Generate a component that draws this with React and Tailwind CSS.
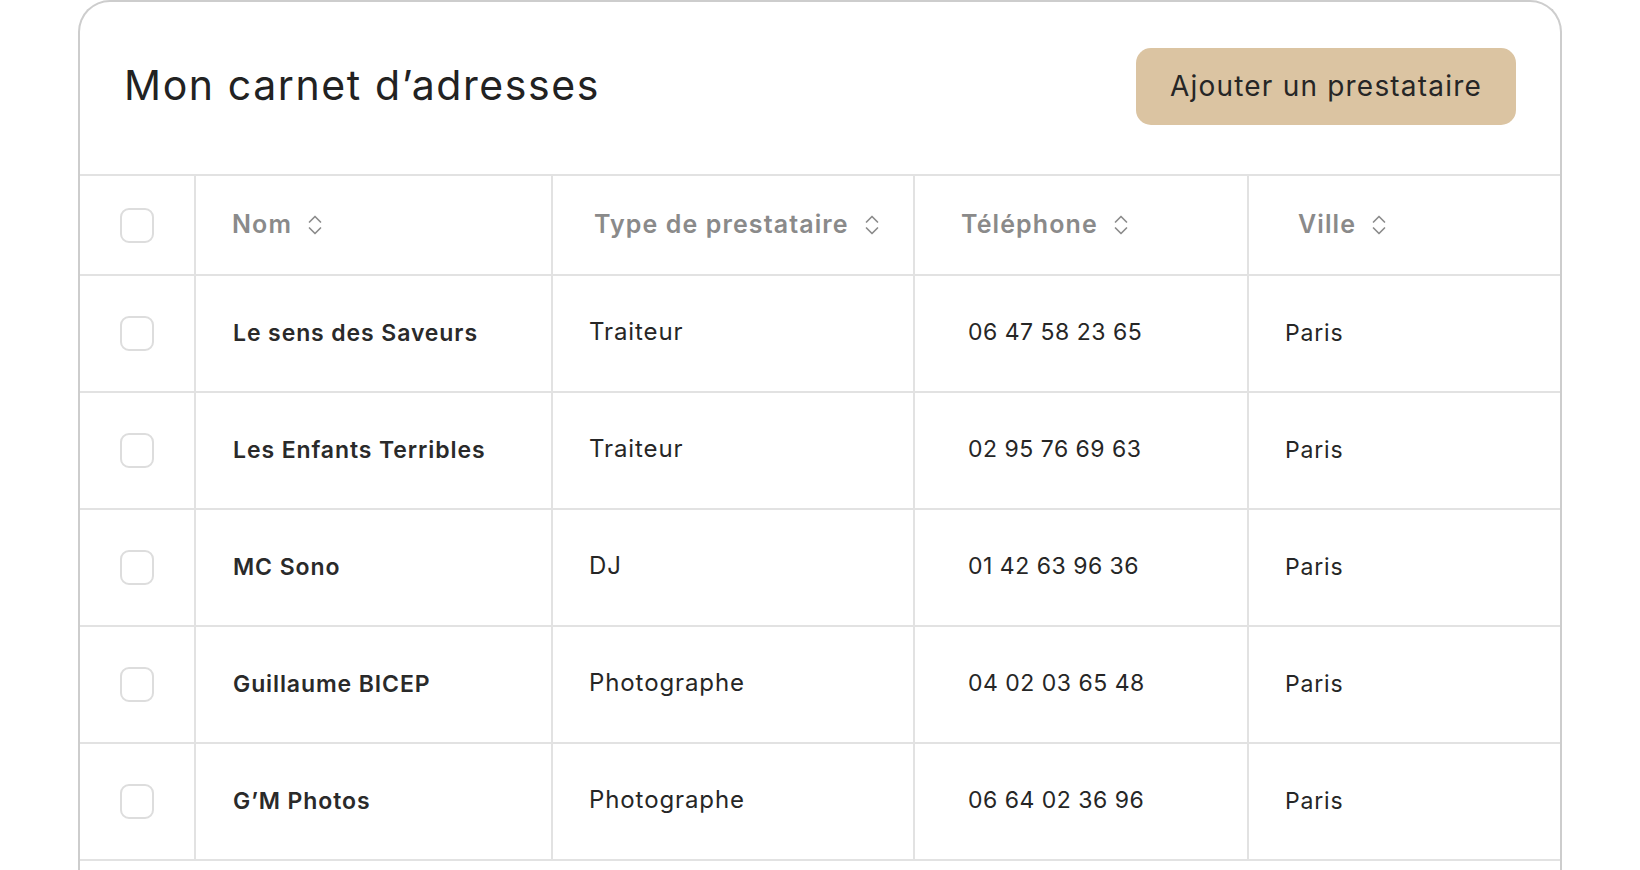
const rows = [
  { name: "Le sens des Saveurs", type: "Traiteur", phone: "06 47 58 23 65", city: "Paris" },
  { name: "Les Enfants Terribles", type: "Traiteur", phone: "02 95 76 69 63", city: "Paris" },
  { name: "MC Sono", type: "DJ", phone: "01 42 63 96 36", city: "Paris" },
  { name: "Guillaume BICEP", type: "Photographe", phone: "04 02 03 65 48", city: "Paris" },
  { name: "G’M Photos", type: "Photographe", phone: "06 64 02 36 96", city: "Paris" },
];

const SortIcon = () => (
  <svg width="14" height="22" viewBox="0 0 14 22" fill="none" stroke="#8c8c8c" strokeWidth="1.7" strokeLinecap="round" strokeLinejoin="round">
    <path d="M1.5 8 L7 2.5 L12.5 8" />
    <path d="M1.5 14 L7 19.5 L12.5 14" />
  </svg>
);

const Checkbox = () => (
  <div className="w-[34px] h-[35px] rounded-[9px] border-2 border-[#dddddd] bg-white" />
);

const HeaderCell = ({ label, className }) => (
  <div className={`flex items-center gap-[16px] border-b-2 border-[#e2e2e2] ${className}`}>
    <span className="text-[25px] font-semibold text-[#8a8a8a] tracking-[1.1px]">{label}</span>
    <SortIcon />
  </div>
);

const App = () => {
  return (
    <div className="min-h-screen bg-white pl-[78px] overflow-hidden" style={{ fontFamily: "Inter, 'Noto Sans', sans-serif" }}>
      <div className="w-[1484px] h-[900px] border-2 border-b-0 border-[#cdcdcd] rounded-t-[32px] overflow-hidden">
        {/* header */}
        <div className="h-[174px] flex items-center justify-between pl-[44px] pr-[44px] pb-[4px] border-b-2 border-[#e2e2e2]">
          <h1 className="text-[41px] font-normal text-[#222222] tracking-[1.6px]">Mon carnet d’adresses</h1>
          <button
            type="button"
            className="w-[380px] h-[77px] rounded-[15px] bg-[#dbc4a2] text-[28px] text-[#262626] font-normal tracking-[1.2px]"
          >
            Ajouter un prestataire
          </button>
        </div>

        {/* table */}
        <div className="grid grid-cols-[116px_357px_362px_334px_1fr]">
          <div className="h-[100px] flex items-center justify-center border-r-2 border-b-2 border-[#e2e2e2]">
            <Checkbox />
          </div>
          <HeaderCell label="Nom" className="pl-[36px] border-r-2" />
          <HeaderCell label="Type de prestataire" className="pl-[41px] border-r-2" />
          <HeaderCell label="Téléphone" className="pl-[46px] border-r-2" />
          <HeaderCell label="Ville" className="pl-[49px]" />

          {rows.map((r) => (
            <div key={r.name} className="contents">
              <div className="h-[117px] flex items-center justify-center border-r-2 border-b-2 border-[#e2e2e2]">
                <Checkbox />
              </div>
              <div className="flex items-center pl-[37px] border-r-2 border-b-2 border-[#e2e2e2] text-[23px] font-semibold text-[#2a2a2a] tracking-[0.9px]">
                {r.name}
              </div>
              <div className="flex items-center pl-[36px] pb-[3px] border-r-2 border-b-2 border-[#e2e2e2] text-[24px] text-[#262626] tracking-[0.9px]">
                {r.type}
              </div>
              <div className="flex items-center pl-[53px] pb-[2px] border-r-2 border-b-2 border-[#e2e2e2] text-[23px] text-[#262626] tracking-[0.5px]">
                {r.phone}
              </div>
              <div className="flex items-center pl-[36px] border-b-2 border-[#e2e2e2] text-[23px] text-[#262626] tracking-[0.8px]">
                {r.city}
              </div>
            </div>
          ))}
        </div>
      </div>
    </div>
  );
};

export default App;
